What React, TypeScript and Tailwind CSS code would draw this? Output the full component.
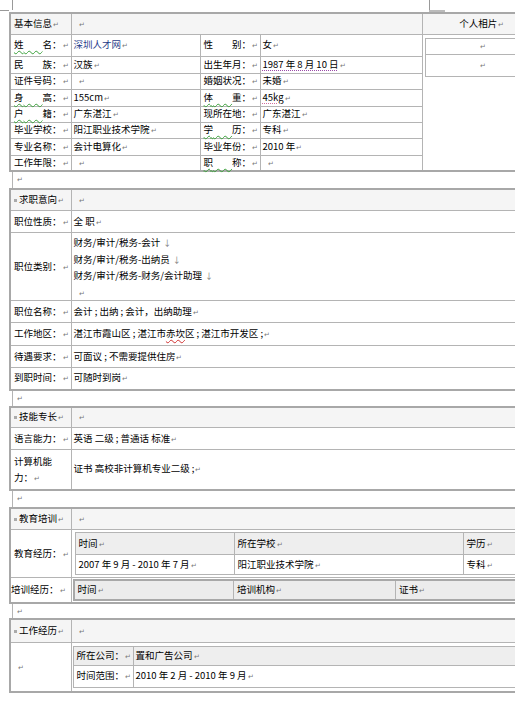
import React from 'react';

const td = 'border border-[#b4b4b4] px-[3px] align-middle';

const Mark = () => <span className="text-[7px] text-[#777] ml-[1px]">↵</span>;
const Br = () => <span className="text-[8px] text-[#777] ml-[3px]">↓</span>;
const Dot = () => <span className="inline-block w-[3px] h-[3px] bg-[#aaa] mr-[2px] align-middle" />;

// two-char labels spread over four char widths
const Spaced = ({ a, b, wavy }: { a: string; b: string; wavy?: boolean }) => (
  <>
    {wavy ? (
      <span className="underline decoration-wavy decoration-[#3aa03a] decoration-1 underline-offset-2">{a}{'\u3000\u3000'}</span>
    ) : (
      a + '\u3000\u3000'
    )}
    {b}
  </>
);

const basicRows: { h: string; l1: React.ReactNode; v1: React.ReactNode; l2: React.ReactNode; v2: React.ReactNode }[] = [
  { h: 'h-[22px]', l1: <Spaced a="姓" b="名：" wavy />, v1: <span className="text-[#1f3c8a]">深圳人才网</span>, l2: <Spaced a="性" b="别：" />, v2: '女' },
  { h: 'h-[17px]', l1: <Spaced a="民" b="族：" />, v1: '汉族', l2: '出生年月：', v2: <span className="underline decoration-dotted decoration-[#9a4aa8] underline-offset-2">1987 年 8 月 10 日</span> },
  { h: 'h-[16px]', l1: '证件号码：', v1: '', l2: '婚姻状况：', v2: '未婚' },
  { h: 'h-[17px]', l1: <Spaced a="身" b="高：" wavy />, v1: '155cm', l2: <Spaced a="体" b="重：" wavy />, v2: <span className="underline decoration-dotted decoration-[#d070a0] underline-offset-2">45kg</span> },
  { h: 'h-[16px]', l1: <Spaced a="户" b="籍：" wavy />, v1: '广东湛江', l2: '现所在地：', v2: '广东湛江' },
  { h: 'h-[16px]', l1: '毕业学校：', v1: '阳江职业技术学院', l2: <Spaced a="学" b="历：" wavy />, v2: '专科' },
  { h: 'h-[17px]', l1: '专业名称：', v1: '会计电算化', l2: '毕业年份：', v2: '2010 年' },
  { h: 'h-[15px]', l1: '工作年限：', v1: '', l2: <Spaced a="职" b="称：" wavy />, v2: '' },
];

const Blank = ({ h }: { h: string }) => (
  <div className={`${h} ml-[3px] border-l border-[#b4b4b4] pl-[3px] flex items-center`}>
    <Mark />
  </div>
);

const Section = ({ title, head, children }: { title: string; head: string; children: React.ReactNode }) => (
  <table className="w-[532px] table-fixed border-collapse border-2 border-[#a8a8a8]">
    <colgroup>
      <col className="w-[61px]" />
      <col />
    </colgroup>
    <tbody>
      <tr className={`${head} bg-[#f5f5f5]`}>
        <td className={`${td} whitespace-nowrap`}>
          <Dot />
          {title}
          <Mark />
        </td>
        <td className={`${td} pl-[6px]`}>
          <Mark />
        </td>
      </tr>
      {children}
    </tbody>
  </table>
);

const Row = ({ h, label, children }: { h: string; label: React.ReactNode; children: React.ReactNode }) => (
  <tr className={h}>
    <td className={`${td} whitespace-nowrap`}>
      {label}
      <Mark />
    </td>
    <td className={`${td} pl-[2px]`}>{children}</td>
  </tr>
);

export default function App() {
  return (
    <div
      className="relative w-[515px] h-[701px] overflow-hidden bg-white text-black text-[9.5px] leading-[13px]"
      style={{ fontFamily: '"Noto Sans CJK SC", "Noto Sans", sans-serif' }}
    >
      {/* page corner marks */}
      <div className="absolute left-0 top-[10px] w-[9px] h-px bg-[#999]" />
      <div className="absolute left-[12px] top-0 w-px h-[10px] bg-[#999]" />
      <div className="absolute left-[429px] top-0 w-px h-[11px] bg-[#999]" />
      <div className="absolute left-[429px] top-[10px] w-[16px] h-[2px] bg-[#bbb]" />

      <div className="pt-[12px] pl-[9px] w-[545px]">
        {/* 基本信息 */}
        <table className="w-[532px] table-fixed border-collapse border-2 border-[#a8a8a8]">
          <colgroup>
            <col className="w-[61px]" />
            <col className="w-[129px]" />
            <col className="w-[60px]" />
            <col className="w-[162px]" />
            <col className="w-[120px]" />
          </colgroup>
          <tbody>
            <tr className="h-[21px] bg-[#f5f5f5]">
              <td className={td}>
                基本信息
                <Mark />
              </td>
              <td className={`${td} pl-[6px]`} colSpan={3}>
                <Mark />
              </td>
              <td className={`${td} text-center`}>
                个人相片
                <Mark />
              </td>
            </tr>
            {basicRows.map((r, i) => (
              <tr key={i} className={r.h}>
                <td className={`${td} whitespace-nowrap`}>
                  {r.l1}
                  <Mark />
                </td>
                <td className={`${td} pl-[2px] ${r.v1 === '' ? 'pl-[6px]' : ''}`}>
                  {r.v1}
                  <Mark />
                </td>
                <td className={`${td} whitespace-nowrap`}>
                  {r.l2}
                  <Mark />
                </td>
                <td className={`${td} pl-[2px] ${r.v2 === '' ? 'pl-[6px]' : ''}`}>
                  {r.v2}
                  <Mark />
                </td>
                {i === 0 && (
                  <td rowSpan={8} className="border border-[#b4b4b4] align-top pl-[2px] pt-[3px] bg-white">
                    <table className="w-full border-collapse">
                      <tbody>
                        <tr className="h-[16px]">
                          <td className="border border-[#b4b4b4] text-center">
                            <Mark />
                          </td>
                        </tr>
                        <tr className="h-[22px]">
                          <td className="border border-[#b4b4b4] text-center">
                            <Mark />
                          </td>
                        </tr>
                      </tbody>
                    </table>
                  </td>
                )}
              </tr>
            ))}
          </tbody>
        </table>

        <Blank h="h-[16px]" />

        {/* 求职意向 */}
        <Section title="求职意向" head="h-[22px]">
          <Row h="h-[22px]" label="职位性质：">
            全 职<Mark />
          </Row>
          <Row h="h-[68px]" label="职位类别：">
            <div className="flex flex-col gap-[3.5px] pt-[3px]">
              <span>
                财务/审计/税务-会计<Br />
              </span>
              <span>
                财务/审计/税务-出纳员<Br />
              </span>
              <span>
                财务/审计/税务-财务/会计助理<Br />
              </span>
              <span className="pl-[4px]">
                <Mark />
              </span>
            </div>
          </Row>
          <Row h="h-[22px]" label="职位名称：">
            会计 ; 出纳 ; 会计，出纳助理<Mark />
          </Row>
          <Row h="h-[23px]" label="工作地区：">
            湛江市霞山区 ; 湛江市
            <span className="underline decoration-wavy decoration-[#d03030] decoration-1 underline-offset-2">赤坎</span>区 ; 湛江市开发区 ;
            <Mark />
          </Row>
          <Row h="h-[22px]" label="待遇要求：">
            可面议 ; 不需要提供住房<Mark />
          </Row>
          <Row h="h-[22px]" label="到职时间：">
            可随时到岗<Mark />
          </Row>
        </Section>

        <Blank h="h-[15px]" />

        {/* 技能专长 */}
        <Section title="技能专长" head="h-[21px]">
          <Row h="h-[22px]" label="语言能力：">
            英语 二级 ; 普通话 标准<Mark />
          </Row>
          <tr className="h-[40px]">
            <td className={`${td} leading-[16px]`}>
              计算机能力：
              <Mark />
            </td>
            <td className={`${td} pl-[2px]`}>
              证书 高校非计算机专业二级 ;<Mark />
            </td>
          </tr>
        </Section>

        <Blank h="h-[16px]" />

        {/* 教育培训 */}
        <Section title="教育培训" head="h-[22px]">
          <tr className="h-[47px]">
            <td className={`${td} whitespace-nowrap`}>
              教育经历：
              <Mark />
            </td>
            <td className="border border-[#b4b4b4] px-[3px] py-[2px] align-middle">
              <table className="w-full table-fixed border-collapse border border-[#a8a8a8]">
                <colgroup>
                  <col className="w-[159px]" />
                  <col className="w-[229px]" />
                  <col />
                </colgroup>
                <tbody>
                  <tr className="h-[22px] bg-[#eeeeee]">
                    <td className={td}>
                      时间
                      <Mark />
                    </td>
                    <td className={td}>
                      所在学校
                      <Mark />
                    </td>
                    <td className={td}>
                      学历
                      <Mark />
                    </td>
                  </tr>
                  <tr className="h-[20px]">
                    <td className={td}>
                      2007 年 9 月 - 2010 年 7 月<Mark />
                    </td>
                    <td className={td}>
                      阳江职业技术学院
                      <Mark />
                    </td>
                    <td className={td}>
                      专科
                      <Mark />
                    </td>
                  </tr>
                </tbody>
              </table>
            </td>
          </tr>
          <tr className="h-[24px]">
            <td className="border border-[#b4b4b4] pl-0 pr-[2px] align-middle whitespace-nowrap">
              培训经历：
              <Mark />
            </td>
            <td className="border border-[#b4b4b4] px-[1px] py-[1px] align-middle">
              <table className="w-full table-fixed border-collapse border-2 border-[#a8a8a8]">
                <colgroup>
                  <col className="w-[160px]" />
                  <col className="w-[162px]" />
                  <col />
                </colgroup>
                <tbody>
                  <tr className="h-[20px] bg-[#ececec]">
                    <td className={td}>
                      时间
                      <Mark />
                    </td>
                    <td className={td}>
                      培训机构
                      <Mark />
                    </td>
                    <td className={td}>
                      证书
                      <Mark />
                    </td>
                  </tr>
                </tbody>
              </table>
            </td>
          </tr>
        </Section>

        <Blank h="h-[14px]" />

        {/* 工作经历 */}
        <Section title="工作经历" head="h-[23px]">
          <tr className="h-[49px]">
            <td className={`${td} pl-[6px]`}>
              <Mark />
            </td>
            <td className="border border-[#b4b4b4] px-[1px] py-[3px] align-middle">
              <table className="w-full table-fixed border-collapse border border-[#a8a8a8]">
                <colgroup>
                  <col className="w-[60px]" />
                  <col />
                </colgroup>
                <tbody>
                  <tr className="h-[19px] bg-[#eeeeee]">
                    <td className={`${td} whitespace-nowrap`}>
                      所在公司：
                      <Mark />
                    </td>
                    <td className={`${td} pl-[2px]`}>
                      置和广告公司
                      <Mark />
                    </td>
                  </tr>
                  <tr className="h-[22px]">
                    <td className={`${td} whitespace-nowrap`}>
                      时间范围：
                      <Mark />
                    </td>
                    <td className={`${td} pl-[2px]`}>
                      2010 年 2 月 - 2010 年 9 月<Mark />
                    </td>
                  </tr>
                </tbody>
              </table>
            </td>
          </tr>
        </Section>
      </div>
    </div>
  );
}
